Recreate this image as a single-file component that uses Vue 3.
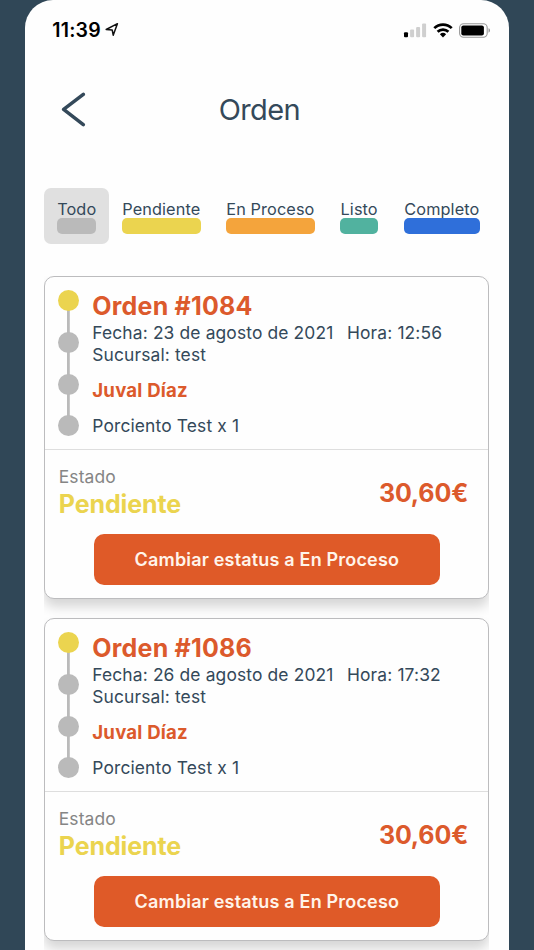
<script setup>
const tabs = [
  { label: 'Todo', color: '#bababa', width: 39.3, active: true },
  { label: 'Pendiente', color: '#ebd44f', width: 78.6 },
  { label: 'En Proceso', color: '#f4a43c', width: 88.4 },
  { label: 'Listo', color: '#51b29f', width: 38 },
  { label: 'Completo', color: '#2f6fda', width: 76.2 }
]
const orders = [
  { id: 1084, date: '23 de agosto de 2021', time: '12:56' },
  { id: 1086, date: '26 de agosto de 2021', time: '17:32' }
]
</script>

<template>
  <div class="page">
    <main class="phone">
      <div class="status">
        <span class="clock">11:39</span>
        <svg class="loc" width="14" height="15" viewBox="0 0 14 15"><path d="M1.2 7.5 12.4 1.7 8.2 13.2 7.2 7.9Z" fill="none" stroke="#111" stroke-width="1.5" stroke-linejoin="round" /></svg>
        <svg class="signal" width="22" height="15" viewBox="0 0 22 15">
          <rect x="0" y="9.3" width="4" height="5" rx="1" fill="#000" />
          <rect x="6.1" y="6.6" width="4" height="7.7" rx="1" fill="#cfcfcf" />
          <rect x="12.1" y="3.9" width="4" height="10.4" rx="1" fill="#cfcfcf" />
          <rect x="18.1" y="0.6" width="4" height="13.7" rx="1" fill="#cfcfcf" />
        </svg>
        <svg class="wifi" width="20" height="15" viewBox="0 0 20 15">
          <g fill="none" stroke="#000" stroke-width="2.7">
            <path d="M1.3 5.1a12.4 12.4 0 0 1 17.4 0" />
            <path d="M4.6 8.8a7.7 7.7 0 0 1 10.8 0" />
          </g>
          <path d="M6.9 11.3a4.5 4.5 0 0 1 6.2 0L10 14.4Z" />
        </svg>
        <svg class="battery" width="32" height="15" viewBox="0 0 32 15">
          <rect x="0.6" y="0.7" width="27.6" height="13.6" rx="4" fill="none" stroke="#999" stroke-width="1.1" />
          <rect x="2.3" y="2.5" width="22.6" height="10" rx="2" />
          <path d="M29.5 5.3c2 .6 2 3.8 0 4.4Z" fill="#999" />
        </svg>
      </div>

      <header class="header">
        <svg class="back" width="26" height="36" viewBox="0 0 26 36"><path d="M22.3 2.4 2.6 17.4 22.3 32.6" fill="none" stroke="#34495a" stroke-width="3.5" stroke-linecap="round" stroke-linejoin="round" /></svg>
        <h1>Orden</h1>
      </header>

      <nav class="tabs">
        <div v-for="t in tabs" :key="t.label" class="tab" :class="{ active: t.active }">
          <span class="tab-label">{{ t.label }}</span>
          <span class="bar" :style="{ width: t.width + 'px', background: t.color }"></span>
        </div>
      </nav>

      <section class="orders">
        <article v-for="o in orders" :key="o.id" class="card">
          <div class="top">
            <div class="steps">
              <i v-for="n in 4" :key="n" class="dot" :class="{ on: n === 1 }"></i>
            </div>
            <div class="info">
              <h2>Orden #{{ o.id }}</h2>
              <div class="line dates"><span class="date">Fecha: {{ o.date }}</span><span class="hour">Hora: {{ o.time }}</span></div>
              <div class="line branch">Sucursal: test</div>
              <div class="client">Juval Díaz</div>
              <div class="line item">Porciento Test x 1</div>
            </div>
          </div>
          <div class="summary">
            <div>
              <div class="state-label">Estado</div>
              <div class="state">Pendiente</div>
            </div>
            <div class="price">30,60€</div>
          </div>
          <button class="action">Cambiar estatus a En Proceso</button>
        </article>
      </section>
    </main>
  </div>
</template>

<style>
body { background: #304757; overflow: hidden; }
</style>

<style scoped>
* { box-sizing: border-box; }
.page {
  height: 950px;
  padding: 0 25.3px 0 25px;
  background: #304757;
  overflow: hidden;
  font-family: Inter, "Liberation Sans", sans-serif;
  color: #34495a;
  white-space: nowrap;
}
.phone {
  height: 950px;
  background: #fefefe;
  border-radius: 28px 28px 0 0;
  padding: 20px 19.3px 0;
  overflow: hidden;
}
.status { display: flex; align-items: center; height: 20px; padding: 0 0 0 8px; color: #000; }
.clock { flex: none; width: 52.7px; font-size: 19.5px; font-weight: 600; line-height: 20px; letter-spacing: 0.2px; }
.loc { margin-top: -1px; }
.signal { margin-left: 285.2px; overflow: visible; }
.wifi { margin-left: 6.8px; }
.battery { margin-left: 6.2px; overflow: visible; }
svg { flex: none; display: block; }
.header { display: grid; grid-template-columns: 60px 1fr 60px; align-items: center; height: 40px; margin-top: 50px; }
.back { margin: -1px 0 0 17px; }
h1 { margin: 0; text-align: center; font-size: 29px; font-weight: 400; line-height: 40px; letter-spacing: -0.6px; padding-right: 15px; }
.tabs { display: flex; margin-top: 58px; height: 56px; }
.tab { padding: 12px 12.8px 0; border-radius: 7px; display: flex; flex-direction: column; align-items: center; }
.tab.active { background: #e0e0e0; }
.tab-label { width: 0; display: flex; justify-content: center; font-size: 16.3px; line-height: 18px; height: 18px; letter-spacing: 0.1px; }
.bar { height: 16px; border-radius: 5px; }
.orders { margin-top: 32px; height: 674px; overflow: hidden; display: flex; flex-direction: column; gap: 19.5px; }
.card {
  flex: none;
  height: 322.5px;
  border: 1.3px solid #bcbcbe;
  border-radius: 10px;
  background: #fefefe;
  box-shadow: 0 8px 12px rgba(0, 0, 0, 0.16);
}
.top { display: flex; height: 173px; padding: 13px 0 0 13px; border-bottom: 1px solid #dedede; }
.steps { display: flex; flex-direction: column; justify-content: space-between; width: 21px; height: 146.5px; background: linear-gradient(#bababa, #bababa) center / 2.8px 130px no-repeat; }
.dot { width: 21px; height: 21px; border-radius: 50%; background: #bababa; }
.dot.on { background: #ebd44f; }
.info { margin-left: 13px; }
h2 { margin: 2px 0 0; font-size: 25px; font-weight: 700; line-height: 28px; color: #dc5a2c; letter-spacing: 0.22px; }
.line { font-size: 17.4px; line-height: 22px; letter-spacing: 0.14px; }
.dates { display: flex; margin-top: 2px; }
.date { width: 254.7px; }
.client { margin-top: 12px; font-size: 18.6px; font-weight: 700; line-height: 24px; color: #dc5a2c; letter-spacing: 0.2px; }
.item { margin-top: 13px; }
.summary { display: flex; justify-content: space-between; padding: 15px 20.3px 0 13.5px; }
.state-label { font-size: 17.4px; line-height: 24px; color: #858585; letter-spacing: 0.12px; }
.state { font-size: 25px; font-weight: 700; line-height: 30px; color: #ebd44f; letter-spacing: -0.1px; }
.price { font-size: 25px; font-weight: 700; line-height: 56px; color: #dc5a2c; letter-spacing: -0.15px; }
.action {
  display: block;
  width: 346px;
  height: 50.5px;
  margin: 13px auto 0;
  padding: 1px 0 0;
  border: 0;
  border-radius: 10px;
  background: #df5a28;
  color: #fff4ea;
  font: 600 18px/49.5px Inter, "Liberation Sans", sans-serif;
  letter-spacing: 0.18px;
}
</style>
